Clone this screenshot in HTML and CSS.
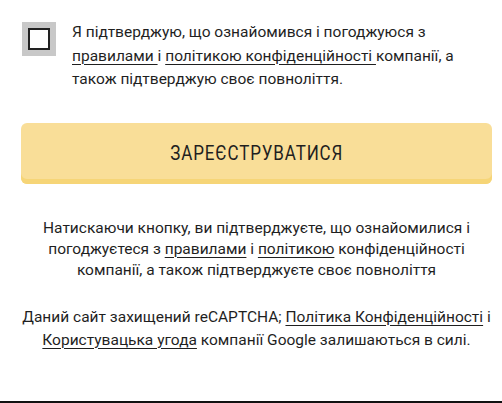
FILE: index.html
```html
<!DOCTYPE html>
<html lang="uk">
<head>
<meta charset="utf-8">
<link rel="stylesheet" href="styles.css">
</head>
<body>
<div class="page">
  <div class="consent">
    <span class="check"><span class="box"></span></span>
    <p class="consent-text">Я підтверджую, що ознайомився і погоджуюся з <a href="#">правилами </a> і <a href="#">політикою конфіденційності </a>компанії, а також підтверджую своє повноліття.</p>
  </div>
  <button class="btn" type="button"><span class="btn-label">Зареєструватися</span></button>
  <p class="note">Натискаючи кнопку, ви підтверджуєте, що ознайомилися і погоджуєтеся з <a href="#">правилами</a> і <a href="#">політикою</a> конфіденційності компанії, а також підтверджуєте своє повноліття</p>
  <p class="note note-captcha">Даний сайт захищений reCAPTCHA; <a href="#">Політика Конфіденційності</a> і <a href="#">Користувацька угода</a> компанії Google залишаються в силі.</p>
</div>
<div class="rule"></div>
</body>
</html>
```
FILE: styles.css
```css
* { box-sizing: border-box; }
html, body { margin: 0; padding: 0; background: #fff; }
body {
  font-family: Roboto, "Noto Sans", sans-serif;
  color: #1f1f1f;
  width: 502px;
  height: 403px;
  position: relative;
  overflow: hidden;
}
a { color: #1f1f1f; text-decoration: underline; text-underline-offset: 3px; text-decoration-thickness: 1px; }
.page { padding: 22px 10px 0 21px; }
.consent { display: flex; align-items: flex-start; gap: 16px; padding-left: 1px; }
.check {
  flex: none;
  width: 34px; height: 34px;
  background: #c8c8c8;
  padding: 6px;
}
.box { display: block; width: 22px; height: 22px; border: 2px solid #222; background: #fff; }
.consent-text {
  margin: 0;
  margin-top: -1px;
  font-size: 15.5px;
  line-height: 23.5px;
  width: 390px;
}
.btn {
  display: flex;
  align-items: center;
  justify-content: center;
  margin-top: 31px;
  width: 471px;
  height: 61px;
  border: 0;
  border-radius: 6px;
  background: #f9de98;
  box-shadow: inset 0 -5px 0 #f6d577;
  font-family: Roboto, sans-serif;
  color: #1f1f1f;
  padding: 0 0 1px;
}
.btn-label {
  display: inline-block;
  font-size: 20px;
  letter-spacing: 1px;
  text-transform: uppercase;
  transform: scaleX(0.85);
}
.note {
  margin: 34px 0 0;
  text-align: center;
  font-size: 15.5px;
  line-height: 21px;
  padding: 0 10px;
}
.note-captcha { margin-top: 25px; line-height: 23px; padding: 0; margin-left: -4px; margin-right: -4px; }
.rule { position: absolute; left: 0; right: 0; top: 401px; height: 2px; background: #111; }
```
